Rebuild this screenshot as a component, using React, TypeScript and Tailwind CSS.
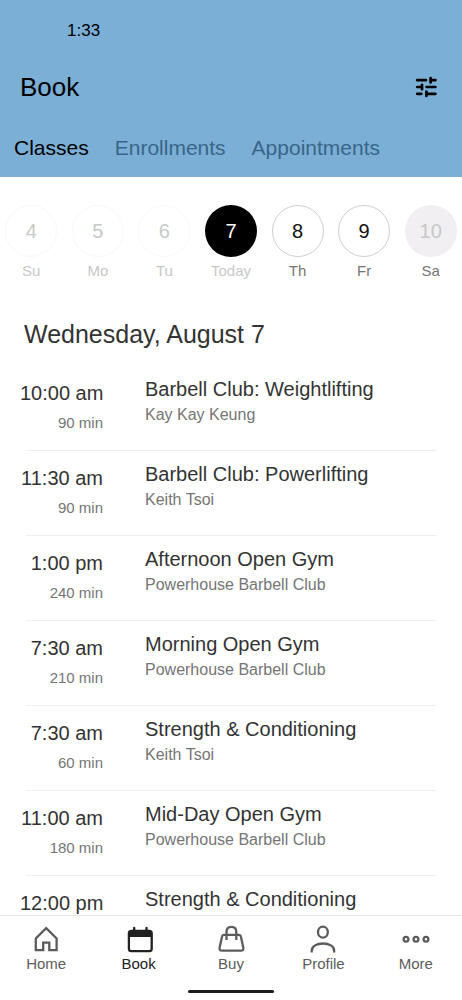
import type { ReactNode } from 'react';

type DayState = 'past' | 'today' | 'open' | 'closed';

type Day = {
  date: number;
  label: string;
  state: DayState;
};

type GymClass = {
  time: string;
  duration: string;
  title: string;
  host: string;
};

const tabs = ['Classes', 'Enrollments', 'Appointments'];

const days: Day[] = [
  { date: 4, label: 'Su', state: 'past' },
  { date: 5, label: 'Mo', state: 'past' },
  { date: 6, label: 'Tu', state: 'past' },
  { date: 7, label: 'Today', state: 'today' },
  { date: 8, label: 'Th', state: 'open' },
  { date: 9, label: 'Fr', state: 'open' },
  { date: 10, label: 'Sa', state: 'closed' },
];

const dayConfig = {
  past: { circle: 'border border-[#f8f8f8] text-[#c8c8c8]', label: 'text-[#c8c8c8]' },
  today: { circle: 'bg-black text-white', label: 'text-[#c8c8c8]' },
  open: { circle: 'border border-[#cfcfcf] text-[#111111]', label: 'text-[#757575]' },
  closed: { circle: 'bg-[#f1eff1] text-[#c8c8c8]', label: 'text-[#757575]' },
};

const classes: GymClass[] = [
  { time: '10:00 am', duration: '90 min', title: 'Barbell Club: Weightlifting', host: 'Kay Kay Keung' },
  { time: '11:30 am', duration: '90 min', title: 'Barbell Club: Powerlifting', host: 'Keith Tsoi' },
  { time: '1:00 pm', duration: '240 min', title: 'Afternoon Open Gym', host: 'Powerhouse Barbell Club' },
  { time: '7:30 am', duration: '210 min', title: 'Morning Open Gym', host: 'Powerhouse Barbell Club' },
  { time: '7:30 am', duration: '60 min', title: 'Strength & Conditioning', host: 'Keith Tsoi' },
  { time: '11:00 am', duration: '180 min', title: 'Mid-Day Open Gym', host: 'Powerhouse Barbell Club' },
  { time: '12:00 pm', duration: '60 min', title: 'Strength & Conditioning', host: 'Keith Tsoi' },
];

const navItems: { label: string; icon: ReactNode }[] = [
  {
    label: 'Home',
    icon: <path d="M5.8 25.2V13.4L16.2 3.2 26.6 13.4V25.2H19.3V17.7H13.2V25.2Z" />,
  },
  {
    label: 'Book',
    icon: (
      <>
        <rect x="5.9" y="5.8" width="22.8" height="20.4" rx="2.4" />
        <path d="M5.9 12V8Q5.9 5.8 8.1 5.8H26.5Q28.7 5.8 28.7 8V12Z" fill="currentColor" stroke="none" />
        <path d="M11.2 3V8M23.5 3V8" strokeLinecap="round" />
      </>
    ),
  },
  {
    label: 'Buy',
    icon: (
      <>
        <path d="M9 9.9H24Q25.6 9.9 25.9 11.5L28.3 22.8Q28.8 25.7 25.9 25.7H7Q4.1 25.7 4.6 22.8L7 11.5Q7.3 9.9 9 9.9Z" />
        <path d="M11.5 15V7Q11.5 1.9 16.4 1.9T21.3 7V15" />
      </>
    ),
  },
  {
    label: 'Profile',
    icon: (
      <>
        <ellipse cx="15.9" cy="7.2" rx="4.9" ry="5.5" />
        <path d="M4.7 27.6V26C4.7 21 10 18.5 16 18.5S27.2 21 27.2 26V27.6" />
      </>
    ),
  },
  {
    label: 'More',
    icon: (
      <>
        <circle cx="6" cy="14.2" r="2.4" />
        <circle cx="16" cy="14.2" r="2.4" />
        <circle cx="26" cy="14.2" r="2.4" />
      </>
    ),
  },
];

function Header() {
  return (
    <header className="shrink-0 bg-[#7bafd6] text-black">
      <div className="px-[67px] pt-5 text-[17px] leading-[22px]">1:33</div>
      <div className="flex items-center justify-between pt-7 pl-5 pr-6">
        <h1 className="text-[26px] leading-[34px]">Book</h1>
        <button aria-label="Filter classes">
          <svg
            className="h-6 w-6"
            viewBox="0 0 24 24"
            fill="none"
            stroke="currentColor"
            strokeWidth="2.7"
            strokeLinecap="round"
            aria-hidden="true"
          >
            <path d="M3.2 5.2H12M17 5.2H21.4M16.6 3V7.4M3.2 12H8M8 9.8V14.2M12.6 12H21.4M3.2 18.8H7.3M12.4 16.6V21M12.4 18.8H21.4" />
          </svg>
        </button>
      </div>
      <nav className="flex gap-[26px] pt-[30px] pb-[15px] pl-3.5 text-[21px] leading-7">
        {tabs.map((tab, i) => (
          <button key={tab} className={i === 0 ? 'text-black' : 'text-[#3a6587]'}>
            {tab}
          </button>
        ))}
      </nav>
    </header>
  );
}

function DayPicker() {
  return (
    <div className="-mx-0.5 grid grid-cols-7 pt-7">
      {days.map((day) => {
        const style = dayConfig[day.state];
        return (
          <button key={day.date} className="flex flex-col items-center gap-1">
            <span className={`flex h-[52px] w-[52px] items-center justify-center rounded-full text-xl ${style.circle}`}>
              {day.date}
            </span>
            <span className={`text-[15px] leading-5 ${style.label}`}>{day.label}</span>
          </button>
        );
      })}
    </div>
  );
}

function ClassRow({ item }: { item: GymClass }) {
  return (
    <li className="px-5">
      <div className="flex h-[84px] gap-[42px]">
        <div className="w-[83px] shrink-0 pt-[15px] text-right whitespace-nowrap">
          <div className="text-xl leading-6 text-[#333333]">{item.time}</div>
          <div className="pt-2 text-[15px] leading-5 text-[#757575]">{item.duration}</div>
        </div>
        <div className="min-w-0 pt-[11px]">
          <h3 className="text-xl leading-6 text-[#333333]">{item.title}</h3>
          <p className="pt-1 text-base leading-5 text-[#757575]">{item.host}</p>
        </div>
      </div>
      <div className="mx-1.5 border-b border-[#efefef]" />
    </li>
  );
}

function BottomNav() {
  return (
    <footer className="shrink-0 border-t border-[#e8e8e8] bg-white">
      <nav className="grid grid-cols-5 pt-[9px]">
        {navItems.map((item) => (
          <a
            key={item.label}
            href="#"
            className={`flex flex-col items-center gap-px ${item.label === 'Book' ? 'text-[#222222]' : 'text-[#5c5c5c]'}`}
          >
            <svg
              className="h-7 w-8"
              viewBox="0 0 32 28"
              fill="none"
              stroke="currentColor"
              strokeWidth="2.3"
              aria-hidden="true"
            >
              {item.icon}
            </svg>
            <span className="text-[15px] leading-5">{item.label}</span>
          </a>
        ))}
      </nav>
      <div className="mx-auto mt-4 mb-[7px] h-[3px] w-[86px] rounded-full bg-[#1c1c1c]" />
    </footer>
  );
}

export default function App() {
  return (
    <div className="flex h-screen flex-col overflow-hidden bg-white font-['Liberation_Sans',Arial,sans-serif]">
      <Header />
      <main className="min-h-0 flex-1 overflow-x-hidden overflow-y-auto [scrollbar-width:none]">
        <DayPicker />
        <h2 className="px-6 pt-[37px] text-[25px] leading-8 text-[#333333]">Wednesday, August 7</h2>
        <ul className="pt-4">
          {classes.map((item, i) => (
            <ClassRow key={i} item={item} />
          ))}
        </ul>
      </main>
      <BottomNav />
    </div>
  );
}
